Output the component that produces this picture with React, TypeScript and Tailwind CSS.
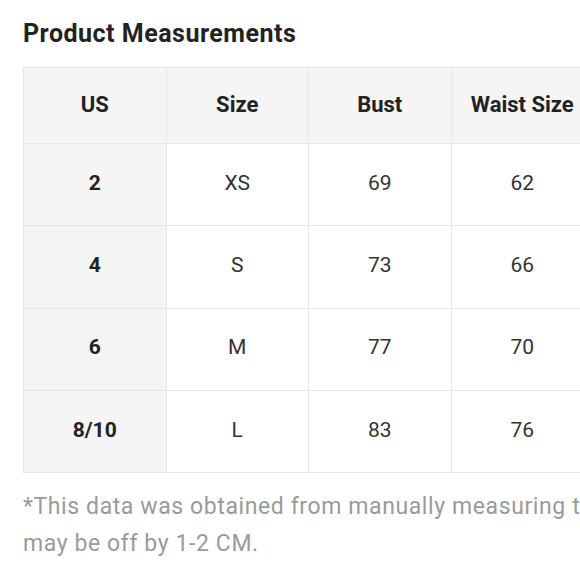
const HEADERS = ['US', 'Size', 'Bust', 'Waist Size']

const ROWS = [
  ['2', 'XS', '69', '62'],
  ['4', 'S', '73', '66'],
  ['6', 'M', '77', '70'],
  ['8/10', 'L', '83', '76'],
]

export default function App() {
  return (
    <div className="w-[580px] h-[580px] overflow-hidden bg-white font-['Roboto',sans-serif]">
      <div className="w-[800px] pl-[23px] pt-[19px]">
        <h2 className="text-[25px] leading-[30px] tracking-[0.5px] font-bold text-[#222]">Product Measurements</h2>

        <table className="mt-[18px] border-collapse table-fixed">
          <thead>
            <tr className="h-[76px] bg-[#f5f5f5]">
              {HEADERS.map(h => (
                <th
                  key={h}
                  className="w-[142.5px] border border-[#e6e6e6] text-[22px] font-bold text-[#222] text-center align-middle pb-[2px]"
                >
                  {h}
                </th>
              ))}
            </tr>
          </thead>
          <tbody>
            {ROWS.map(row => (
              <tr key={row[0]} className="h-[82.3px]">
                {row.map((cell, i) => (
                  <td
                    key={i}
                    className={`border border-[#e6e6e6] text-[21px] text-center align-middle pb-[2px] ${
                      i === 0 ? 'bg-[#f5f5f5] font-bold text-[#222]' : 'text-[#333]'
                    }`}
                  >
                    {cell}
                  </td>
                ))}
              </tr>
            ))}
          </tbody>
        </table>

        {/* Footnote */}
        <p className="mt-[15px] text-[23px] leading-[37px] tracking-[0.6px] text-[#9a9a9a]">
          *This data was obtained from manually measuring the product, it
          <br />
          may be off by 1-2 CM.
        </p>
      </div>
    </div>
  )
}
